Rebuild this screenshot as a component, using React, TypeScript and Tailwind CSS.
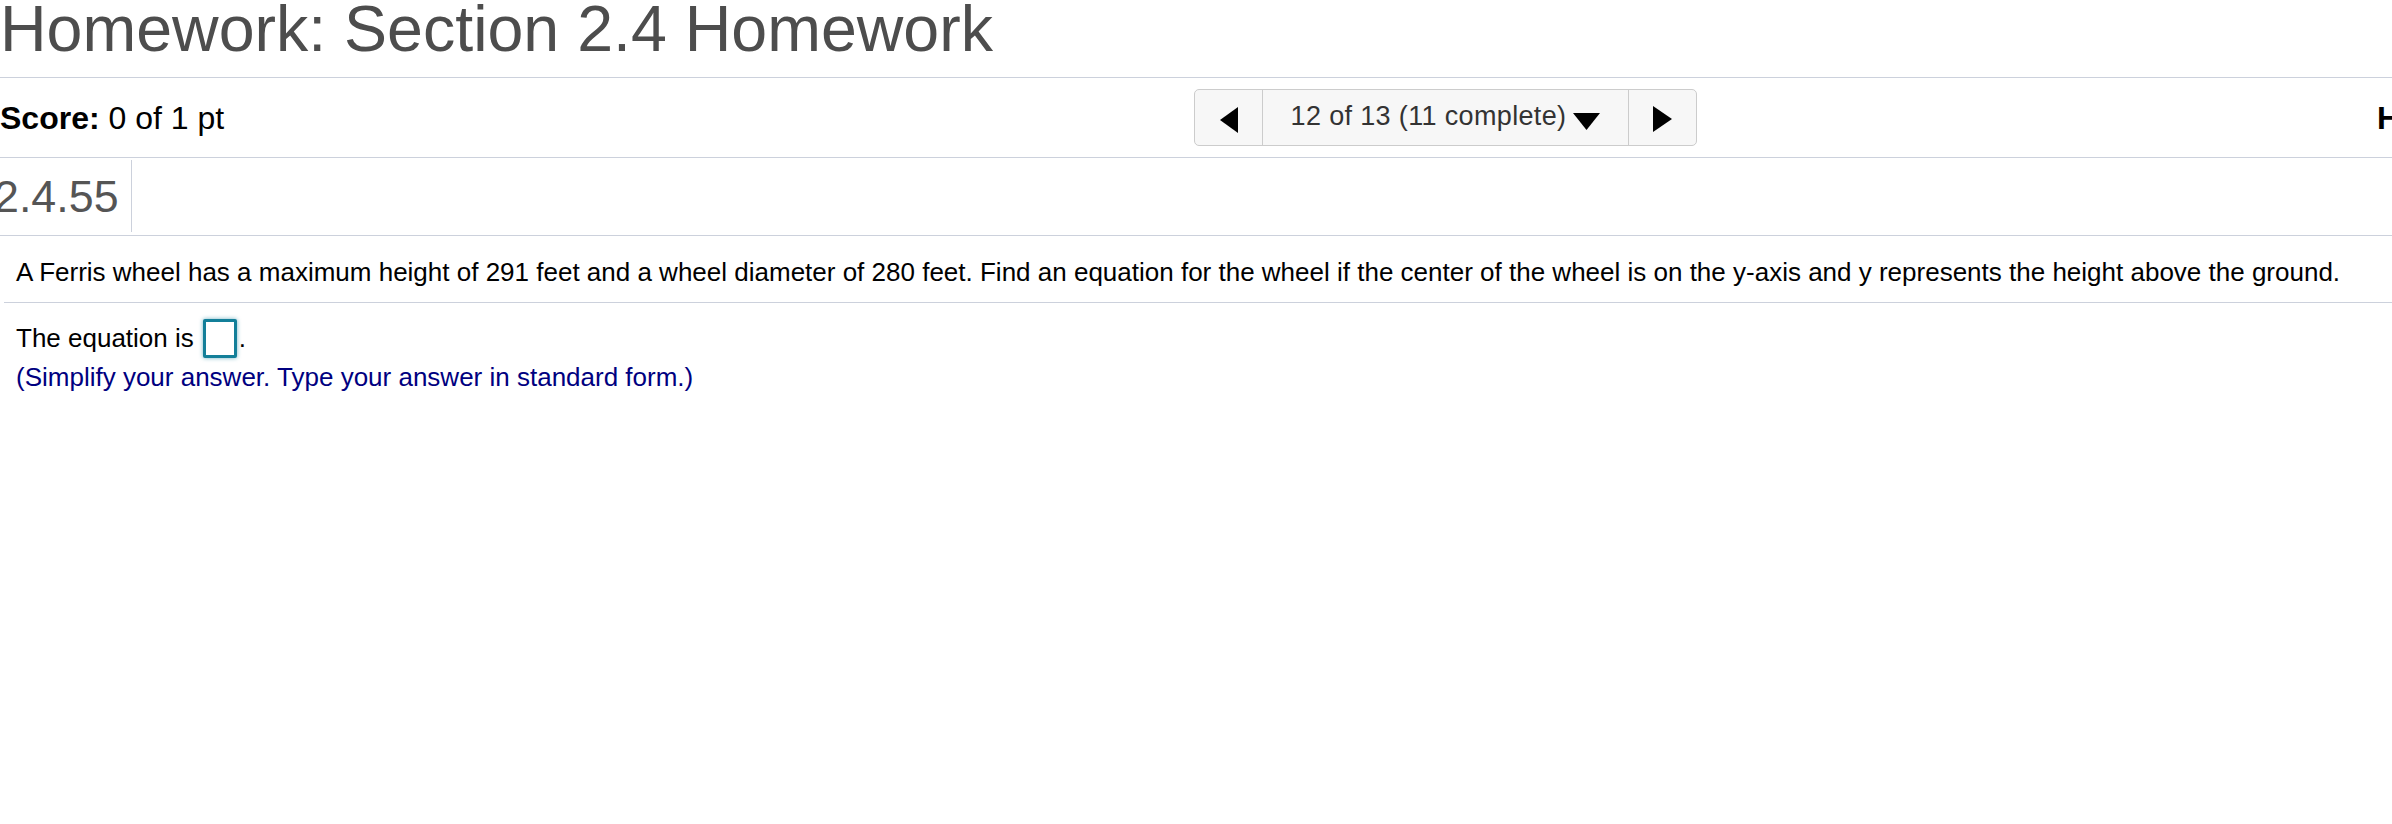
import React from "react"

function Triangle({ dir, className }: { dir: "left" | "right" | "down"; className?: string }) {
  const points =
    dir === "left" ? "18,0 18,26 0,13" : dir === "right" ? "0,0 19,13 0,26" : "0,0 27,0 13.5,17"
  const w = dir === "down" ? 27 : dir === "left" ? 18 : 19
  const h = dir === "down" ? 17 : 26
  return (
    <svg width={w} height={h} viewBox={`0 0 ${w} ${h}`} className={className}>
      <polygon points={points} fill="#000" />
    </svg>
  )
}

function QuestionNav() {
  return (
    <div className="flex h-[57px] w-[503px] shrink-0 rounded-[5px] border border-[#cccccc] bg-[#f7f7f7]">
      <button className="flex w-[67px] items-center justify-center pt-[4px]">
        <Triangle dir="left" />
      </button>
      <button className="flex w-[367px] items-center justify-center gap-[7px] border-l border-r border-[#cccccc]">
        <span className="-mt-[2px] text-[27px] leading-none tracking-[0.35px] text-[#333333]">
          12 of 13 (11 complete)
        </span>
        <Triangle dir="down" className="mt-[7px]" />
      </button>
      <button className="flex w-[67px] items-center justify-center pt-[3px]">
        <Triangle dir="right" />
      </button>
    </div>
  )
}

export default function App() {
  return (
    <div className="h-[824px] w-full overflow-hidden bg-white font-['Liberation_Sans',Arial,sans-serif]">
      {/* title */}
      <div className="box-border h-[78px] border-b border-[#ccd1dc]">
        <h1 className="whitespace-nowrap text-[64.5px] leading-[58px] text-[#4d4d4d]">
          Homework: Section 2.4 Homework
        </h1>
      </div>

      {/* score + question selector */}
      <div className="box-border flex h-[80px] items-center border-b border-[#ccd1dc]">
        <div className="w-[1194px] shrink-0 whitespace-nowrap text-[32px] leading-none text-black">
          <span className="font-bold">Score:</span> 0 of 1 pt
        </div>
        <QuestionNav />
        <div className="shrink-0 whitespace-nowrap pl-[680px] text-[32px] leading-none text-black">
          <span className="font-bold">HW Score:</span> 84.62%, 11 of 13 points
        </div>
      </div>

      {/* question id */}
      <div className="box-border flex h-[78px] border-b border-[#ccd1dc]">
        <div className="my-[2px] flex h-[72px] w-[132px] items-center border-r border-[#ccd1dc]">
          <span className="-ml-[6px] text-[44.8px] leading-none text-[#555555]">2.4.55</span>
        </div>
      </div>

      {/* problem statement */}
      <div className="ml-[4px] box-border h-[67px] border-b border-[#ccd1dc] pl-[12px] pt-[23px]">
        <p className="whitespace-nowrap text-[26px] leading-none text-black">
          A Ferris wheel has a maximum height of 291 feet and a wheel diameter of 280 feet. Find an equation for the
          wheel if the center of the wheel is on the y-axis and y represents the height above the ground.
        </p>
      </div>

      {/* answer */}
      <div className="pl-[16px]">
        <div className="mt-[15px] flex h-[40px] items-center text-[26px] leading-none text-black">
          <span>The equation is</span>
          <span className="ml-[9px] box-border h-[39px] w-[34px] rounded-[2px] border-[3px] border-[#137f99] bg-white shadow-[0_0_4px_rgba(19,127,153,0.6)]" />
          <span className="ml-[2px]">.</span>
        </div>
        <p className="mt-[6px] text-[26px] leading-none text-[#000080]">
          (Simplify your answer. Type your answer in standard form.)
        </p>
      </div>
    </div>
  )
}
